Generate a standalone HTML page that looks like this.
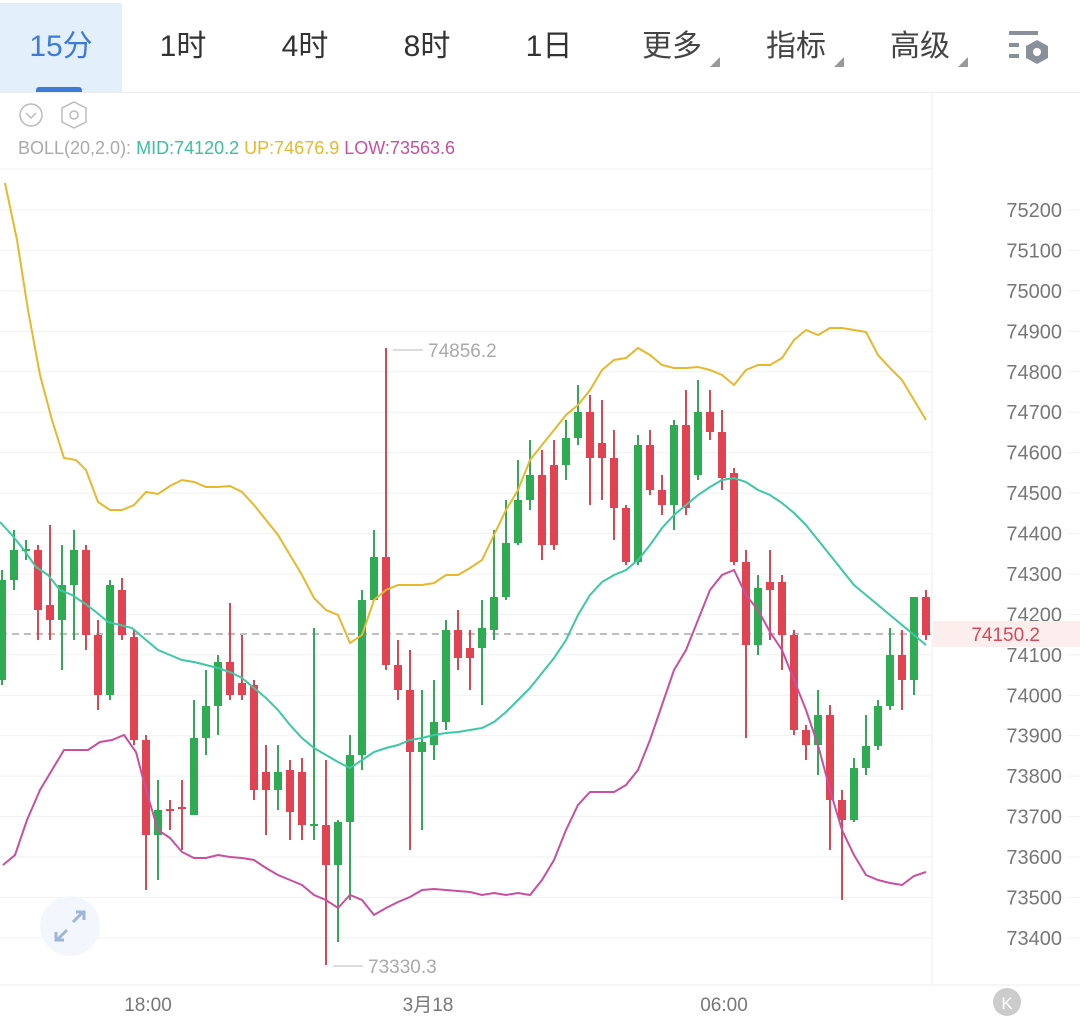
<!DOCTYPE html>
<html><head><meta charset="utf-8"><style>
html,body{margin:0;padding:0;width:1080px;height:1028px;overflow:hidden;background:#fff;font-family:"Liberation Sans","Noto Sans CJK SC",sans-serif}
.tab{position:absolute;top:0;height:92px;line-height:94px;font-size:30px;color:#333;text-align:center}
</style></head><body>
<div style="position:absolute;left:0;top:3px;width:122px;height:89px;background:#e4effc"></div>
<div style="position:absolute;left:36px;top:87px;width:46px;height:6px;background:#3d7bd6;border-radius:3px 3px 0 0"></div>
<div class="tab" style="left:0;width:122px;color:#3d7bd6">15分</div>
<div class="tab" style="left:122px;width:122px">1时</div>
<div class="tab" style="left:244px;width:122px">4时</div>
<div class="tab" style="left:366px;width:122px">8时</div>
<div class="tab" style="left:488px;width:122px">1日</div>
<div class="tab" style="left:610px;width:124px;color:#444">更多</div>
<div class="tab" style="left:734px;width:124px;color:#444">指标</div>
<div class="tab" style="left:858px;width:124px;color:#444">高级</div>
<div style="position:absolute;left:0;top:92px;width:1080px;height:1px;background:#eee"></div>
<svg width="1080" height="1028" style="position:absolute;left:0;top:0" id="s">
<polygon points="710,67 720,57 720,67" fill="#999"/>
<polygon points="834,67 844,57 844,67" fill="#999"/>
<polygon points="958,67 968,57 968,67" fill="#999"/>
<g fill="#8a8f9c"><rect x="1009" y="31" width="29" height="4"/><rect x="1009" y="43" width="10" height="4"/><rect x="1009" y="54" width="10" height="4"/></g>
<polygon points="1037,40 1048,46 1048,58 1037,64 1026,58 1026,46" fill="#8a8f9c"/><circle cx="1037" cy="52" r="4" fill="#fff"/>
<circle cx="31" cy="115" r="11" fill="none" stroke="#bbb" stroke-width="1.5"/><polyline points="26,113 31,118 36,113" fill="none" stroke="#bbb" stroke-width="1.5"/>
<polygon points="74,102 86,108 86,122 74,128 62,122 62,108" fill="none" stroke="#bbb" stroke-width="1.5"/><circle cx="74" cy="115" r="4" fill="none" stroke="#bbb" stroke-width="1.5"/>
<text x="18" y="154" font-size="18" fill="#aaa">BOLL(20,2.0): <tspan fill="#3cbf9c">MID:74120.2</tspan> <tspan fill="#e8b72a">UP:74676.9</tspan> <tspan fill="#c94fa0">LOW:73563.6</tspan></text>
<line x1="932" y1="93" x2="932" y2="985" stroke="#eee"/>
<line x1="0" y1="985" x2="1080" y2="985" stroke="#eee"/>
<g id="grid" stroke="#f1f1f1" stroke-width="1"></g>
<g id="lab" font-size="20" fill="#777" text-anchor="end"></g>
<rect x="933" y="621" width="147" height="26" fill="#fdeeee"/>
<line x1="0" y1="634" x2="932" y2="634" stroke="#aaa" stroke-width="1.5" stroke-dasharray="7,5"/>
<text x="1040" y="641" font-size="19" fill="#d8485a" text-anchor="end">74150.2</text>
<g id="c"></g>
<g fill="none" stroke-width="2">
<polyline id="up" stroke="#e8b72a"/><polyline id="mid" stroke="#3cc9a4"/><polyline id="low" stroke="#c94fa0"/>
</g>
<line x1="393" y1="350" x2="423" y2="350" stroke="#bbb"/><text x="428" y="357" font-size="19" fill="#aaa">74856.2</text>
<line x1="333" y1="966" x2="363" y2="966" stroke="#bbb"/><text x="368" y="973" font-size="19" fill="#aaa">73330.3</text>
<circle cx="70" cy="926" r="30" fill="#f3f7fd"/>
<g stroke="#9fb4d6" stroke-width="3" fill="none"><polyline points="73,922 83,912"/><polyline points="76,912 84,912 84,920"/><polyline points="67,930 57,940"/><polyline points="56,932 56,940 64,940"/></g>
<g font-size="19" fill="#777" text-anchor="middle"><text x="148" y="1011">18:00</text><text x="428" y="1011">3月18</text><text x="724" y="1011">06:00</text></g>
<circle cx="1007" cy="1002" r="14" fill="#ccc"/><text x="1007" y="1009" font-size="17" fill="#fff" text-anchor="middle">K</text>
</svg>
<script>
var ns="http://www.w3.org/2000/svg";function el(p,t,a){var e=document.createElementNS(ns,t);for(var k in a)e.setAttribute(k,a[k]);p.appendChild(e);return e}
var g=document.getElementById('grid'),lb=document.getElementById('lab');
for(var i=0;i<19;i++){var p=75200-i*100,y=210+i*40.44;el(g,'line',{x1:0,x2:932,y1:y,y2:y});el(g,'line',{x1:1068,x2:1080,y1:y,y2:y});var t=el(lb,'text',{x:1062,y:y+7});t.textContent=p;}
el(g,'line',{x1:0,x2:932,y1:169,y2:169});
var C=[[2,'g',580,680,570,685],[14,'g',550,580,530,590],[26,'g',549,551,540,560],[38,'r',550,610,545,640],[50,'r',605,620,525,640],[62,'g',585,620,545,670],[74,'g',550,585,530,640],[86,'r',550,635,545,650],[98,'r',635,695,620,710],[110,'g',585,695,580,700],[122,'r',590,635,578,640],[134,'r',637,740,630,745],[146,'r',740,835,735,890],[158,'g',810,835,780,880],[170,'r',809,811,800,830],[182,'r',807,809,780,850],[194,'g',738,815,700,815],[206,'g',706,738,670,755],[218,'g',662,706,655,735],[230,'r',662,695,603,700],[242,'r',683,695,635,700],[254,'r',685,790,680,800],[266,'r',772,790,745,835],[278,'g',772,790,745,810],[290,'r',770,812,760,840],[302,'r',772,825,758,840],[314,'g',824,826,628,840],[326,'r',825,865,760,965],[338,'g',822,865,820,942],[350,'g',755,822,735,900],[362,'g',600,755,590,770],[374,'g',557,600,530,600],[386,'r',557,665,348,670],[398,'r',665,690,640,700],[410,'r',690,752,650,850],[422,'g',742,752,690,830],[434,'g',722,745,680,760],[446,'g',630,722,620,730],[458,'r',630,658,610,670],[470,'r',648,658,630,690],[482,'g',628,648,600,705],[494,'g',597,630,530,640],[506,'g',543,597,500,600],[518,'g',500,543,460,545],[530,'g',475,500,440,510],[542,'r',475,545,450,560],[554,'r',465,545,440,550],[566,'g',438,465,420,480],[578,'g',412,438,385,445],[590,'r',412,458,395,505],[602,'r',443,458,400,500],[614,'r',458,508,430,540],[626,'r',508,562,505,565],[638,'g',445,562,435,565],[650,'r',445,490,430,495],[662,'r',490,505,475,515],[674,'g',425,505,420,530],[686,'r',425,508,390,515],[698,'g',412,475,380,480],[710,'r',412,432,390,440],[722,'r',432,478,410,490],[734,'r',473,562,468,565],[746,'r',562,645,550,738],[758,'g',588,645,575,655],[770,'r',582,590,550,640],[782,'r',582,635,575,670],[794,'r',635,730,630,735],[806,'r',730,745,725,760],[818,'g',715,745,690,775],[830,'r',715,800,705,850],[842,'r',800,820,790,900],[854,'g',768,820,758,822],[866,'g',746,768,715,775],[878,'g',706,746,700,750],[890,'g',655,706,628,710],[902,'r',655,680,630,710],[914,'g',597,680,597,695],[926,'r',597,635,590,640]];
var cg=document.getElementById('c');
C.forEach(function(c){var col=c[1]=='g'?'#2fab54':'#e04452';el(cg,'line',{x1:c[0],x2:c[0],y1:c[4],y2:c[5],stroke:col,'stroke-width':2});el(cg,'rect',{x:c[0]-4,y:c[2],width:8,height:Math.max(2,c[3]-c[2]),fill:col});});
document.getElementById('up').setAttribute('points',"5,183 17,240 28,310 40,375 52,420 64,458 76,460 86,470 98,502 110,510 122,510 134,505 146,492 158,494 170,486 182,480 194,482 206,487 218,487 230,486 242,492 254,505 266,520 278,535 290,555 302,575 314,598 326,610 338,615 350,643 362,635 374,600 386,590 398,585 410,585 422,585 434,583 446,575 458,575 470,568 482,560 494,535 506,510 518,490 530,460 542,445 554,430 566,415 578,405 590,390 602,370 614,360 626,358 638,348 650,355 662,365 674,368 686,368 698,367 710,370 722,375 734,385 746,370 758,365 770,365 782,358 794,340 806,330 818,335 830,328 842,328 854,330 866,332 878,355 890,368 902,380 914,400 926,420");
document.getElementById('mid').setAttribute('points',"0,522 12,535 24,550 36,567 48,575 60,590 72,595 84,603 96,612 108,622 120,625 132,628 146,640 158,650 170,655 182,660 194,662 206,665 218,668 230,672 242,678 254,688 266,698 278,710 290,725 302,738 314,748 326,755 338,762 350,768 362,760 374,752 386,748 398,745 410,740 422,738 434,735 446,733 458,732 470,730 482,728 494,722 506,712 518,700 530,688 542,673 554,658 566,640 578,615 590,595 602,582 614,575 626,570 638,560 650,545 662,528 674,515 686,505 698,495 710,487 722,480 734,478 746,482 758,490 770,495 782,503 794,513 806,525 818,540 830,555 842,570 854,585 866,595 878,605 890,615 902,625 914,635 926,645");
document.getElementById('low').setAttribute('points',"3,865 15,855 27,820 40,790 52,770 64,750 76,750 88,750 100,742 112,740 124,735 136,752 146,790 158,830 170,838 182,852 194,858 206,858 218,855 230,857 242,858 254,860 266,868 278,875 290,880 302,885 314,895 326,900 338,908 350,895 362,900 374,915 386,908 398,902 410,897 422,890 434,889 446,890 458,891 470,892 482,895 494,893 506,895 518,893 530,895 542,880 554,860 566,830 578,805 590,792 602,792 614,792 626,785 638,770 650,740 662,705 674,670 686,650 698,620 710,590 722,575 734,570 746,595 758,610 770,632 782,650 794,680 806,710 818,745 830,790 842,830 854,855 866,875 878,880 890,883 902,885 914,876 926,872");
</script>
</body></html>
